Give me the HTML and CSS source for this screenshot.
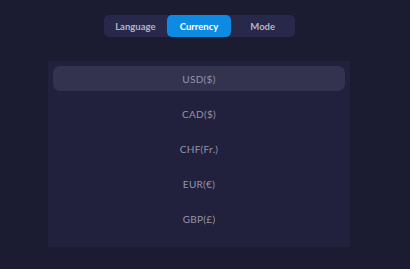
FILE: index.html
```html
<!DOCTYPE html>
<html lang="en">
<head>
    <meta charset="UTF-8">
    <meta name="viewport" content="width=device-width, initial-scale=1.0">
    <title>Settings</title>
    <link rel="stylesheet" href="styles.css">
</head>
<body>
    <div class="container">
        <nav class="tabs">
            <button class="tab">Language</button>
            <button class="tab active">Currency</button>
            <button class="tab">Mode</button>
        </nav>

        <ul class="currency-list">
            <li class="currency selected">USD($)</li>
            <li class="currency">CAD($)</li>
            <li class="currency">CHF(Fr.)</li>
            <li class="currency">EUR(€)</li>
            <li class="currency">GBP(£)</li>
        </ul>
    </div>
</body>
</html>
```

FILE: styles.css
```css
:root {
    --bg: #1b1b31;
    --panel: #21213d;
    --bar: #28284a;
    --hover: #33334f;
    --accent: #0d8ae2;
    --text: #9494ac;
    --radius: 5px;
}

* {
    box-sizing: border-box;
    margin: 0;
    padding: 0;
}

body {
    font-family: Lato, "Open Sans", sans-serif;
    background-color: var(--bg);
    color: var(--text);
    min-height: 100vh;
}

.container {
    width: 398px;
    padding-top: 15px;
    display: flex;
    flex-direction: column;
    align-items: center;
    gap: 24px;
}

.tabs {
    display: flex;
    width: 191px;
    height: 22px;
    background-color: var(--bar);
    border-radius: var(--radius);
}

.tab {
    flex: 1;
    border: none;
    background: none;
    font-family: inherit;
    font-size: 9.5px;
    font-weight: 700;
    color: #b4b4c8;
    border-radius: var(--radius);
    cursor: pointer;
}

.tab.active {
    background-color: var(--accent);
    color: #ffffff;
}

.currency-list {
    list-style: none;
    width: 302px;
    padding: 5px 5px 6px;
    background-color: var(--panel);
}

.currency {
    height: 25px;
    margin-bottom: 10px;
    display: flex;
    justify-content: center;
    align-items: center;
    font-size: 10px;
    letter-spacing: 0.3px;
    border-radius: 7px;
    cursor: pointer;
}

.currency.selected {
    background-color: var(--hover);
}
```
